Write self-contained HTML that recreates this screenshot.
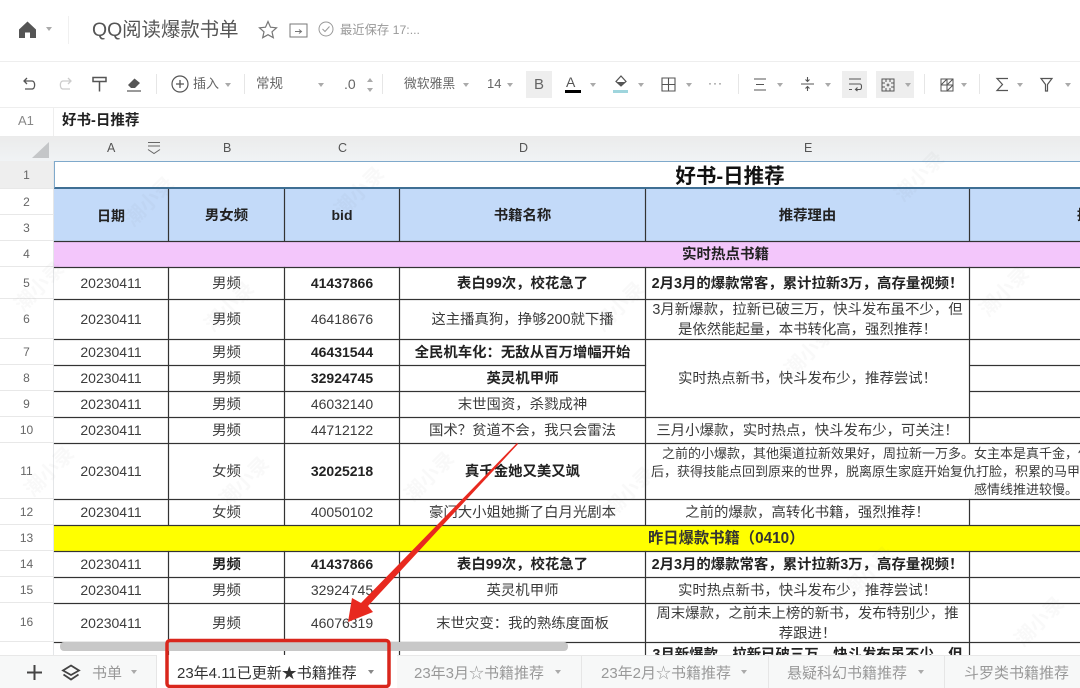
<!DOCTYPE html>
<html lang="zh"><head><meta charset="utf-8"><title>QQ阅读爆款书单</title>
<style>
*{box-sizing:border-box}
html,body{margin:0;padding:0;width:1080px;height:688px;overflow:hidden;background:#fff}
#p{position:absolute;left:0;top:0;width:1080px;height:688px;overflow:hidden;background:#fff;filter:blur(.35px);font-family:"Liberation Sans","Noto Sans CJK SC",sans-serif;color:#444}
.a{position:absolute;white-space:nowrap}
.c{position:absolute;display:flex;align-items:center;justify-content:center;text-align:center;font-size:14px;color:#3c3c3c;overflow:visible;white-space:nowrap;line-height:20px}
.c[style*="left:400px"],.c[style*="left:646px"],.c[style*="left:169px"]{font-size:14.4px;padding-top:2px}
.b{font-weight:bold;color:#222}
.h{position:absolute;left:0;width:53px;display:flex;align-items:center;justify-content:center;font-size:12px;color:#666;background:#fff;border-bottom:1px solid #e8e8e8}
.l{position:absolute;background:#333;box-shadow:0 0 .8px #444}
.tb{position:absolute;font-size:13px;line-height:16px;color:#666;white-space:nowrap}
.ar{position:absolute;width:0;height:0;border-left:3px solid transparent;border-right:3px solid transparent;border-top:4px solid #aaa}
.sep{position:absolute;top:74px;width:1px;height:20px;background:#e6e6e6}
.tab{position:absolute;top:665px;font-size:15px;color:#999;line-height:18px;white-space:nowrap}
.w{position:absolute;font-size:20px;line-height:24px;color:rgba(110,110,110,.045);transform:rotate(-45deg);white-space:nowrap;font-weight:bold}
svg{position:absolute;overflow:visible}
</style></head><body><div id="p">

<!-- top bar -->
<svg style="left:18px;top:20px" width="20" height="20" viewBox="0 0 20 20"><path d="M1 9.500L9.500 1.500L18 9.500V18H12V12.500H7V18H1Z" fill="#555"/></svg>
<div class="ar" style="left:46px;top:27px"></div>
<div class="a" style="left:68px;top:16px;width:1px;height:28px;background:#f0f0f0"></div>
<div class="a" style="left:92px;top:17px;font-size:19.4px;color:#555;line-height:26px">QQ阅读爆款书单</div>
<svg style="left:258px;top:20px" width="20" height="19" viewBox="0 0 20 19"><path d="M10 1.500L12.500 7.200L18.500 7.800L14 11.800L15.300 17.700L10 14.700L4.700 17.700L6 11.800L1.500 7.800L7.500 7.200Z" fill="none" stroke="#777" stroke-width="1.200"/></svg>
<svg style="left:289px;top:23px" width="19" height="15" viewBox="0 0 19 15"><path d="M1 1H18V14H1ZM6 8.500H12M10 6.500L12.500 8.500L10 10.500" fill="none" stroke="#777" stroke-width="1"/></svg>
<svg style="left:318px;top:21px" width="16" height="16" viewBox="0 0 16 16"><circle cx="8" cy="8" r="7" fill="none" stroke="#999" stroke-width="1"/><path d="M4.500 8L7 10.500L11.500 5.500" fill="none" stroke="#999" stroke-width="1"/></svg>
<div class="a" style="left:340px;top:22px;font-size:12.3px;color:#999;line-height:16px">最近保存 17:...</div>
<div class="a" style="left:0;top:61px;width:1080px;height:1px;background:#eee"></div>

<!-- toolbar -->
<svg style="left:22px;top:76px" width="16" height="16" viewBox="0 0 16 16"><path d="M5 2L2 5L5 8M2 5H10C13.500 5 13.500 13 10 13H3" fill="none" stroke="#555" stroke-width="1.300"/></svg>
<svg style="left:57px;top:76px" width="16" height="16" viewBox="0 0 16 16"><path d="M11 2L14 5L11 8M14 5H6C2.500 5 2.500 13 6 13H13" fill="none" stroke="#ccc" stroke-width="1.300"/></svg>
<svg style="left:92px;top:76px" width="15" height="17" viewBox="0 0 15 17"><path d="M1 1.500H14V5.500H1ZM7.500 5.500V15.500" fill="none" stroke="#555" stroke-width="1.500"/></svg>
<svg style="left:126px;top:76px" width="16" height="17" viewBox="0 0 16 17"><path d="M2 9L8.500 2.500L14 7L9 12H5Z" fill="#555"/><path d="M1 15H15" stroke="#555" stroke-width="1.200"/></svg>
<div class="sep" style="left:156px"></div>
<svg style="left:171px;top:75px" width="18" height="18" viewBox="0 0 18 18"><circle cx="9" cy="9" r="8" fill="none" stroke="#555" stroke-width="1.200"/><path d="M9 5V13M5 9H13" stroke="#555" stroke-width="1.300"/></svg>
<div class="tb" style="left:193px;top:76px">插入</div><div class="ar" style="left:225px;top:83px"></div>
<div class="sep" style="left:244px"></div>
<div class="tb" style="left:256px;top:76px;font-size:13.5px">常规</div><div class="ar" style="left:318px;top:83px"></div>
<div class="tb" style="left:344px;top:76px;font-size:14px">.0</div>
<div class="ar" style="left:367px;top:78px;transform:rotate(180deg)"></div><div class="ar" style="left:367px;top:88px"></div>
<div class="sep" style="left:382px"></div>
<div class="tb" style="left:404px;top:76px;font-size:12.8px">微软雅黑</div><div class="ar" style="left:463px;top:83px"></div>
<div class="tb" style="left:487px;top:76px">14</div><div class="ar" style="left:507px;top:83px"></div>
<div class="a" style="left:526px;top:71px;width:26px;height:27px;background:#eee;color:#666;font-size:15px;text-align:center;line-height:27px">B</div>
<div class="a" style="left:566px;top:75px;font-size:14px;color:#555;line-height:14px">A</div>
<div class="a" style="left:565px;top:90px;width:16px;height:3px;background:#000"></div>
<div class="ar" style="left:590px;top:83px"></div>
<svg style="left:614px;top:75px" width="14" height="13" viewBox="0 0 14 13"><path d="M7 1L12 6.500L7 11L2 6.500Z" fill="none" stroke="#555" stroke-width="1.200"/><path d="M3 7H11L7 11Z" fill="#555"/></svg>
<div class="a" style="left:613px;top:90px;width:15px;height:3px;background:#9fd5dd"></div>
<div class="ar" style="left:638px;top:83px"></div>
<svg style="left:661px;top:77px" width="15" height="15" viewBox="0 0 15 15"><path d="M1 1H14V14H1ZM7.500 1V14M1 7.500H14" fill="none" stroke="#555" stroke-width="1.100"/></svg>
<div class="ar" style="left:686px;top:83px"></div>
<div class="a" style="left:708px;top:76px;font-size:12px;color:#666;letter-spacing:1px">···</div>
<div class="sep" style="left:738px"></div>
<svg style="left:753px;top:78px" width="14" height="13" viewBox="0 0 14 13"><path d="M1 1H13M3 6.500H11M1 12H13" fill="none" stroke="#555" stroke-width="1.100"/></svg>
<div class="ar" style="left:777px;top:83px"></div>
<svg style="left:800px;top:76px" width="15" height="16" viewBox="0 0 15 16"><path d="M1 8H14M7.500 1V5.500M7.500 10.500V15M5.500 3.500L7.500 5.500L9.500 3.500M5.500 12.500L7.500 10.500L9.500 12.500" fill="none" stroke="#555" stroke-width="1.100"/></svg>
<div class="ar" style="left:825px;top:83px"></div>
<div class="a" style="left:842px;top:71px;width:25px;height:27px;background:#eee"></div>
<svg style="left:848px;top:78px" width="14" height="13" viewBox="0 0 14 13"><path d="M1 1H13M1 6H12C14 6 14 11.500 12 11.500H8M9.500 9.500L7.500 11.500L9.500 13M1 11.500H4" fill="none" stroke="#555" stroke-width="1.100"/></svg>
<div class="a" style="left:876px;top:71px;width:38px;height:27px;background:#eee"></div>
<svg style="left:881px;top:78px" width="14" height="14" viewBox="0 0 14 14"><path d="M1 1H13V13H1ZM5 1V4M9 1V4M5 10V13M9 10V13M1 5H4M1 9H4M10 5H13M10 9H13M5.500 7H8.500M7 5.500V8.500" fill="none" stroke="#555" stroke-width="1"/></svg>
<div class="ar" style="left:905px;top:83px"></div>
<div class="sep" style="left:924px"></div>
<svg style="left:940px;top:78px" width="14" height="14" viewBox="0 0 14 14"><path d="M1 1H13V13H1ZM7 1V13M1 7H13M1 7L7 1M7 13L13 7M7 7L13 1" fill="none" stroke="#555" stroke-width="1"/></svg>
<div class="ar" style="left:961px;top:83px"></div>
<div class="sep" style="left:979px"></div>
<svg style="left:996px;top:77px" width="13" height="15" viewBox="0 0 13 15"><path d="M12 1.500H1L6.500 7.500L1 13.500H12" fill="none" stroke="#555" stroke-width="1.200"/></svg>
<div class="ar" style="left:1017px;top:83px"></div>
<svg style="left:1040px;top:77px" width="13" height="15" viewBox="0 0 13 15"><path d="M1 1.500H12L7.500 7.500V14L5.500 14V7.500Z" fill="none" stroke="#555" stroke-width="1.200"/></svg>
<div class="ar" style="left:1065px;top:83px"></div>
<div class="a" style="left:0;top:107px;width:1080px;height:1px;background:#eee"></div>

<!-- formula -->
<div class="a" style="left:18px;top:112px;font-size:13px;color:#888;line-height:18px">A1</div>
<div class="a" style="left:53px;top:108px;width:1px;height:28px;background:#eee"></div>
<div class="a b" style="left:62px;top:111px;font-size:14.5px;color:#222;line-height:20px;font-weight:bold">好书-日推荐</div>

<!-- header row -->
<div class="a" style="left:0;top:136px;width:1080px;height:25px;background:linear-gradient(#ebebeb,#f0f3f5)"></div>
<svg style="left:32px;top:141px" width="18" height="18"><path d="M0 17L17 1V17Z" fill="#c4c6c8"/></svg>
<div class="a" style="left:107px;top:140px;font-size:12.500px;color:#555;line-height:16px">A</div>
<svg style="left:147px;top:141px" width="14" height="14" viewBox="0 0 14 14"><path d="M1 1.500H13M1 5H13M1 8.500L7 12.500L13 8.500" fill="none" stroke="#666" stroke-width="1"/></svg>
<div class="a" style="left:223px;top:140px;font-size:12.500px;color:#555;line-height:16px">B</div>
<div class="a" style="left:338px;top:140px;font-size:12.500px;color:#555;line-height:16px">C</div>
<div class="a" style="left:519px;top:140px;font-size:12.500px;color:#555;line-height:16px">D</div>
<div class="a" style="left:804px;top:140px;font-size:12.500px;color:#555;line-height:16px">E</div>

<!-- row headers -->
<div class="h" style="top:161px;height:28px;background:#eeeeee">1</div>
<div class="h" style="top:189px;height:26px">2</div>
<div class="h" style="top:215px;height:26px">3</div>
<div class="h" style="top:241px;height:26px">4</div>
<div class="h" style="top:267px;height:32px">5</div>
<div class="h" style="top:299px;height:40px">6</div>
<div class="h" style="top:339px;height:26px">7</div>
<div class="h" style="top:365px;height:26px">8</div>
<div class="h" style="top:391px;height:26px">9</div>
<div class="h" style="top:417px;height:26px">10</div>
<div class="h" style="top:443px;height:56px">11</div>
<div class="h" style="top:499px;height:26px">12</div>
<div class="h" style="top:525px;height:26px">13</div>
<div class="h" style="top:551px;height:26px">14</div>
<div class="h" style="top:577px;height:26px">15</div>
<div class="h" style="top:603px;height:39px">16</div>
<div class="a" style="left:53px;top:161px;width:1px;height:494px;background:#e4e6e8"></div>

<!-- fills -->
<div class="a" style="left:54px;top:189px;width:1026px;height:52px;background:#c3daf9"></div>
<div class="a" style="left:54px;top:241px;width:1026px;height:26px;background:#f3c6fb"></div>
<div class="a" style="left:54px;top:525px;width:1026px;height:26px;background:#ffff00"></div>

<!-- row 1 -->
<div class="a" style="left:54px;top:161px;width:1026px;height:28px;border:1px solid #7fa9cb;border-bottom:2px solid #3f6f94;border-right:0"></div>
<div class="c b" style="left:54px;top:163px;width:1352px;height:28px;font-size:20.5px;color:#111">好书-日推荐</div>

<!-- horizontal lines -->
<div class="l" style="left:54px;top:241px;width:1026px;height:1px"></div>
<div class="l" style="left:54px;top:267px;width:1026px;height:1px"></div>
<div class="l" style="left:54px;top:299px;width:1026px;height:1px"></div>
<div class="l" style="left:54px;top:339px;width:1026px;height:1px"></div>
<div class="l" style="left:54px;top:365px;width:592px;height:1px"></div>
<div class="l" style="left:970px;top:365px;width:110px;height:1px"></div>
<div class="l" style="left:54px;top:391px;width:592px;height:1px"></div>
<div class="l" style="left:970px;top:391px;width:110px;height:1px"></div>
<div class="l" style="left:54px;top:417px;width:1026px;height:1px"></div>
<div class="l" style="left:54px;top:443px;width:1026px;height:1px"></div>
<div class="l" style="left:54px;top:499px;width:1026px;height:1px"></div>
<div class="l" style="left:54px;top:525px;width:1026px;height:1px"></div>
<div class="l" style="left:54px;top:551px;width:1026px;height:1px"></div>
<div class="l" style="left:54px;top:577px;width:1026px;height:1px"></div>
<div class="l" style="left:54px;top:603px;width:1026px;height:1px"></div>
<div class="l" style="left:54px;top:642px;width:1026px;height:1px"></div>

<!-- vertical lines -->
<div class="l" style="left:168px;top:189px;width:1px;height:52px"></div>
<div class="l" style="left:284px;top:189px;width:1px;height:52px"></div>
<div class="l" style="left:399px;top:189px;width:1px;height:52px"></div>
<div class="l" style="left:645px;top:189px;width:1px;height:52px"></div>
<div class="l" style="left:969px;top:189px;width:1px;height:52px"></div>
<div class="l" style="left:168px;top:267px;width:1px;height:258px"></div>
<div class="l" style="left:284px;top:267px;width:1px;height:258px"></div>
<div class="l" style="left:399px;top:267px;width:1px;height:258px"></div>
<div class="l" style="left:645px;top:267px;width:1px;height:258px"></div>
<div class="l" style="left:969px;top:267px;width:1px;height:176px"></div>
<div class="l" style="left:969px;top:499px;width:1px;height:26px"></div>
<div class="l" style="left:168px;top:551px;width:1px;height:104px"></div>
<div class="l" style="left:284px;top:551px;width:1px;height:104px"></div>
<div class="l" style="left:399px;top:551px;width:1px;height:104px"></div>
<div class="l" style="left:645px;top:551px;width:1px;height:104px"></div>
<div class="l" style="left:969px;top:551px;width:1px;height:104px"></div>

<!-- header labels -->
<div class="c b" style="left:54px;top:190px;width:114px;height:52px">日期</div>
<div class="c b" style="left:169px;top:189px;width:115px;height:52px">男女频</div>
<div class="c b" style="left:285px;top:189px;width:114px;height:52px">bid</div>
<div class="c b" style="left:400px;top:189px;width:245px;height:52px">书籍名称</div>
<div class="c b" style="left:646px;top:189px;width:323px;height:52px">推荐理由</div>
<div class="a b" style="left:1077px;top:205px;font-size:14px;line-height:20px">推</div>

<div class="a b" style="left:682px;top:245px;font-size:14.5px;color:#222;line-height:20px">实时热点书籍</div>

<!-- rows -->
<div class="c" style="left:54px;top:267px;width:114px;height:32px">20230411</div><div class="c" style="left:169px;top:267px;width:115px;height:32px">男频</div><div class="c b" style="left:285px;top:267px;width:114px;height:32px">41437866</div><div class="c b" style="left:400px;top:267px;width:245px;height:32px">表白99次，校花急了</div><div class="c b" style="left:646px;top:267px;width:323px;height:32px">2月3月的爆款常客，累计拉新3万，高存量视频！</div>

<div class="c" style="left:54px;top:299px;width:114px;height:40px">20230411</div><div class="c" style="left:169px;top:299px;width:115px;height:40px">男频</div><div class="c" style="left:285px;top:299px;width:114px;height:40px">46418676</div><div class="c" style="left:400px;top:299px;width:245px;height:40px">这主播真狗，挣够200就下播</div><div class="c" style="left:646px;top:299px;width:323px;height:40px">3月新爆款，拉新已破三万，快斗发布虽不少，但<br>是依然能起量，本书转化高，强烈推荐！</div>

<div class="c" style="left:54px;top:339px;width:114px;height:26px">20230411</div><div class="c" style="left:169px;top:339px;width:115px;height:26px">男频</div><div class="c b" style="left:285px;top:339px;width:114px;height:26px">46431544</div><div class="c b" style="left:400px;top:339px;width:245px;height:26px">全民机车化：无敌从百万增幅开始</div>
<div class="c" style="left:646px;top:339px;width:323px;height:78px">实时热点新书，快斗发布少，推荐尝试！</div>

<div class="c" style="left:54px;top:365px;width:114px;height:26px">20230411</div><div class="c" style="left:169px;top:365px;width:115px;height:26px">男频</div><div class="c b" style="left:285px;top:365px;width:114px;height:26px">32924745</div><div class="c b" style="left:400px;top:365px;width:245px;height:26px">英灵机甲师</div>

<div class="c" style="left:54px;top:391px;width:114px;height:26px">20230411</div><div class="c" style="left:169px;top:391px;width:115px;height:26px">男频</div><div class="c" style="left:285px;top:391px;width:114px;height:26px">46032140</div><div class="c" style="left:400px;top:391px;width:245px;height:26px">末世囤资，杀戮成神</div>

<div class="c" style="left:54px;top:417px;width:114px;height:26px">20230411</div><div class="c" style="left:169px;top:417px;width:115px;height:26px">男频</div><div class="c" style="left:285px;top:417px;width:114px;height:26px">44712122</div><div class="c" style="left:400px;top:417px;width:245px;height:26px">国术？贫道不会，我只会雷法</div><div class="c" style="left:646px;top:417px;width:323px;height:26px">三月小爆款，实时热点，快斗发布少，可关注！</div>

<div class="c" style="left:54px;top:443px;width:114px;height:56px">20230411</div><div class="c" style="left:169px;top:443px;width:115px;height:56px">女频</div><div class="c b" style="left:285px;top:443px;width:114px;height:56px">32025218</div><div class="c b" style="left:400px;top:443px;width:245px;height:56px">真千金她又美又飒</div>
<div class="a" style="left:662px;top:445px;font-size:13px;color:#3c3c3c;line-height:18px">之前的小爆款，其他渠道拉新效果好，周拉新一万多。女主本是真千金，但</div>
<div class="a" style="left:651px;top:463px;font-size:13px;color:#3c3c3c;line-height:18px">后，获得技能点回到原来的世界，脱离原生家庭开始复仇打脸，积累的马甲</div>
<div class="a" style="left:974px;top:481px;font-size:13px;color:#3c3c3c;line-height:18px">感情线推进较慢。</div>

<div class="c" style="left:54px;top:499px;width:114px;height:26px">20230411</div><div class="c" style="left:169px;top:499px;width:115px;height:26px">女频</div><div class="c" style="left:285px;top:499px;width:114px;height:26px">40050102</div><div class="c" style="left:400px;top:499px;width:245px;height:26px">豪门大小姐她撕了白月光剧本</div><div class="c" style="left:646px;top:499px;width:323px;height:26px">之前的爆款，高转化书籍，强烈推荐！</div>

<div class="a b" style="left:648px;top:528px;font-size:15.3px;color:#333;line-height:22px">昨日爆款书籍（0410）</div>

<div class="c" style="left:54px;top:551px;width:114px;height:26px">20230411</div><div class="c b" style="left:169px;top:551px;width:115px;height:26px">男频</div><div class="c b" style="left:285px;top:551px;width:114px;height:26px">41437866</div><div class="c b" style="left:400px;top:551px;width:245px;height:26px">表白99次，校花急了</div><div class="c b" style="left:646px;top:551px;width:323px;height:26px">2月3月的爆款常客，累计拉新3万，高存量视频！</div>

<div class="c" style="left:54px;top:577px;width:114px;height:26px">20230411</div><div class="c" style="left:169px;top:577px;width:115px;height:26px">男频</div><div class="c" style="left:285px;top:577px;width:114px;height:26px">32924745</div><div class="c" style="left:400px;top:577px;width:245px;height:26px">英灵机甲师</div><div class="c" style="left:646px;top:577px;width:323px;height:26px">实时热点新书，快斗发布少，推荐尝试！</div>

<div class="c" style="left:54px;top:603px;width:114px;height:39px">20230411</div><div class="c" style="left:169px;top:603px;width:115px;height:39px">男频</div><div class="c" style="left:285px;top:603px;width:114px;height:39px">46076319</div><div class="c" style="left:400px;top:603px;width:245px;height:39px">末世灾变：我的熟练度面板</div><div class="c" style="left:646px;top:603px;width:323px;height:39px">周末爆款，之前未上榜的新书，发布特别少，推<br>荐跟进！</div>

<div class="c b" style="left:646px;top:643px;width:323px;height:20px;align-items:flex-start">3月新爆款，拉新已破三万，快斗发布虽不少，但</div>

<!-- watermarks -->
<div class="w" style="left:10px;top:275px">潮小录</div>
<div class="w" style="left:20px;top:460px">潮小录</div>
<div class="w" style="left:200px;top:295px">潮小录</div>
<div class="w" style="left:215px;top:470px">潮小录</div>
<div class="w" style="left:400px;top:465px">潮小录</div>
<div class="w" style="left:120px;top:190px">潮小录</div>
<div class="w" style="left:330px;top:180px">潮小录</div>
<div class="w" style="left:590px;top:295px">潮小录</div>
<div class="w" style="left:780px;top:340px">潮小录</div>
<div class="w" style="left:890px;top:165px">潮小录</div>
<div class="w" style="left:975px;top:280px">潮小录</div>
<div class="w" style="left:600px;top:480px">潮小录</div>
<div class="w" style="left:840px;top:560px">潮小录</div>
<div class="w" style="left:1010px;top:610px">潮小录</div>

<!-- scrollbar -->
<div class="a" style="left:60px;top:642px;width:508px;height:9px;background:#c8c8c8;border-radius:4px"></div>

<!-- tab bar -->
<div class="a" style="left:0;top:655px;width:1080px;height:33px;background:#f7f8f8;border-top:1px solid #e8e8e8"></div>
<svg style="left:26px;top:664px" width="17" height="17" viewBox="0 0 17 17"><path d="M8.500 1V16M1 8.500H16" stroke="#444" stroke-width="2"/></svg>
<svg style="left:61px;top:664px" width="20" height="18" viewBox="0 0 20 18"><path d="M10 1.500L18 6.500L10 11L2 6.500ZM2.500 10.500L10 15.500L17.500 10.500" fill="none" stroke="#444" stroke-width="1.800"/></svg>
<div class="tab" style="left:92px">书单</div>
<div class="ar" style="left:131px;top:670px"></div>
<div class="a" style="left:156px;top:655px;width:1px;height:33px;background:#e6e6e6"></div>
<div class="a" style="left:157px;top:655px;width:240px;height:33px;background:#fff"></div>
<div class="tab" style="left:177px;color:#333">23年4.11已更新★书籍推荐</div>
<div class="ar" style="left:368px;top:670px;border-top-color:#888"></div>
<div class="tab" style="left:414px">23年3月☆书籍推荐</div>
<div class="ar" style="left:555px;top:670px"></div>
<div class="a" style="left:581px;top:656px;width:1px;height:32px;background:#e6e6e6"></div>
<div class="tab" style="left:601px">23年2月☆书籍推荐</div>
<div class="ar" style="left:741px;top:670px"></div>
<div class="a" style="left:768px;top:656px;width:1px;height:32px;background:#e6e6e6"></div>
<div class="tab" style="left:787px">悬疑科幻书籍推荐</div>
<div class="ar" style="left:918px;top:670px"></div>
<div class="a" style="left:944px;top:656px;width:1px;height:32px;background:#e6e6e6"></div>
<div class="tab" style="left:964px">斗罗类书籍推荐</div>

<!-- red annotations -->
<svg style="left:0;top:0" width="1080" height="688" viewBox="0 0 1080 688">
<path d="M517 443L518 444L368 606L373 612L348 622L352 598L361 603Z" fill="#e8291f"/>
<rect x="167" y="640.500" width="222" height="46" rx="3" fill="none" stroke="#d9261c" stroke-width="3.500"/>
</svg>
</div></body></html>
